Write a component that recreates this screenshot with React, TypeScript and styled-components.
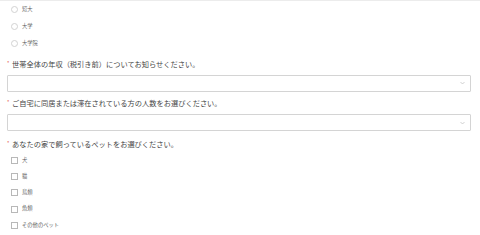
import React from "react";
import styled, { createGlobalStyle } from "styled-components";

const Global = createGlobalStyle`
  html, body { margin: 0; padding: 0; background: #fff; }
  body { font-family: "Noto Sans CJK JP", "Noto Sans", sans-serif; }
`;

const Page = styled.div`
  width: 480px;
  height: 235px;
  box-sizing: border-box;
  border-top: 1px solid #ececec;
  overflow: hidden;
`;

const OptionList = styled.div<{ $rowH: number; $mt?: number }>`
  display: flex;
  flex-direction: column;
  padding-left: 10.5px;
  margin-top: ${(p) => p.$mt ?? 0}px;
  & > * { height: ${(p) => p.$rowH}px; }
`;

const Option = styled.label`
  display: flex;
  align-items: center;
  gap: 4.5px;
  font-size: 5.3px;
  line-height: 1;
  color: #5f5f5f;
`;

const RadioMark = styled.span`
  width: 7px;
  height: 7px;
  box-sizing: border-box;
  border: 1px solid #d2d2d2;
  border-radius: 50%;
  flex: none;
`;

const CheckMark = styled.span`
  width: 7px;
  height: 7px;
  box-sizing: border-box;
  border: 1px solid #b8b8b8;
  flex: none;
`;

const Question = styled.div<{ $mt: number }>`
  display: flex;
  align-items: center;
  height: 10px;
  margin-top: ${(p) => p.$mt}px;
  padding-left: 7px;
  font-size: 7.24px;
  line-height: 1;
  color: #444;
  white-space: nowrap;
`;

const Required = styled.span`
  color: #e2574c;
  font-size: 5px;
  align-self: flex-start;
  width: 5px;
`;

const Select = styled.div<{ $mt: number }>`
  margin: ${(p) => p.$mt}px 9px 0 7px;
  height: 17px;
  box-sizing: border-box;
  border: 1px solid #d4d4d4;
  border-radius: 1px;
  display: flex;
  align-items: center;
  justify-content: flex-end;
  padding-right: 5px;
`;

const Chevron = () => (
  <svg width="5" height="4" viewBox="0 0 5 4">
    <path d="M0.5 1 L2.5 3 L4.5 1" fill="none" stroke="#bdbdbd" strokeWidth="0.7" />
  </svg>
);

const education = ["短大", "大学", "大学院"];
const pets = ["犬", "猫", "鳥類", "魚類", "その他のペット"];

export default function App() {
  return (
    <Page>
      <Global />
      <OptionList $rowH={17.2}>
        {education.map((e) => (
          <Option key={e}>
            <RadioMark />
            {e}
          </Option>
        ))}
      </OptionList>
      <Question $mt={7}>
        <Required>*</Required>世帯全体の年収（税引き前）についてお知らせください。
      </Question>
      <Select $mt={5}>
        <Chevron />
      </Select>
      <Question $mt={7.5}>
        <Required>*</Required>ご自宅に同居または滞在されている方の人数をお選びください。
      </Question>
      <Select $mt={5}>
        <Chevron />
      </Select>
      <Question $mt={9}>
        <Required>*</Required>あなたの家で飼っているペットをお選びください。
      </Question>
      <OptionList $rowH={16.1} $mt={2.7}>
        {pets.map((p) => (
          <Option key={p}>
            <CheckMark />
            {p}
          </Option>
        ))}
      </OptionList>
    </Page>
  );
}
